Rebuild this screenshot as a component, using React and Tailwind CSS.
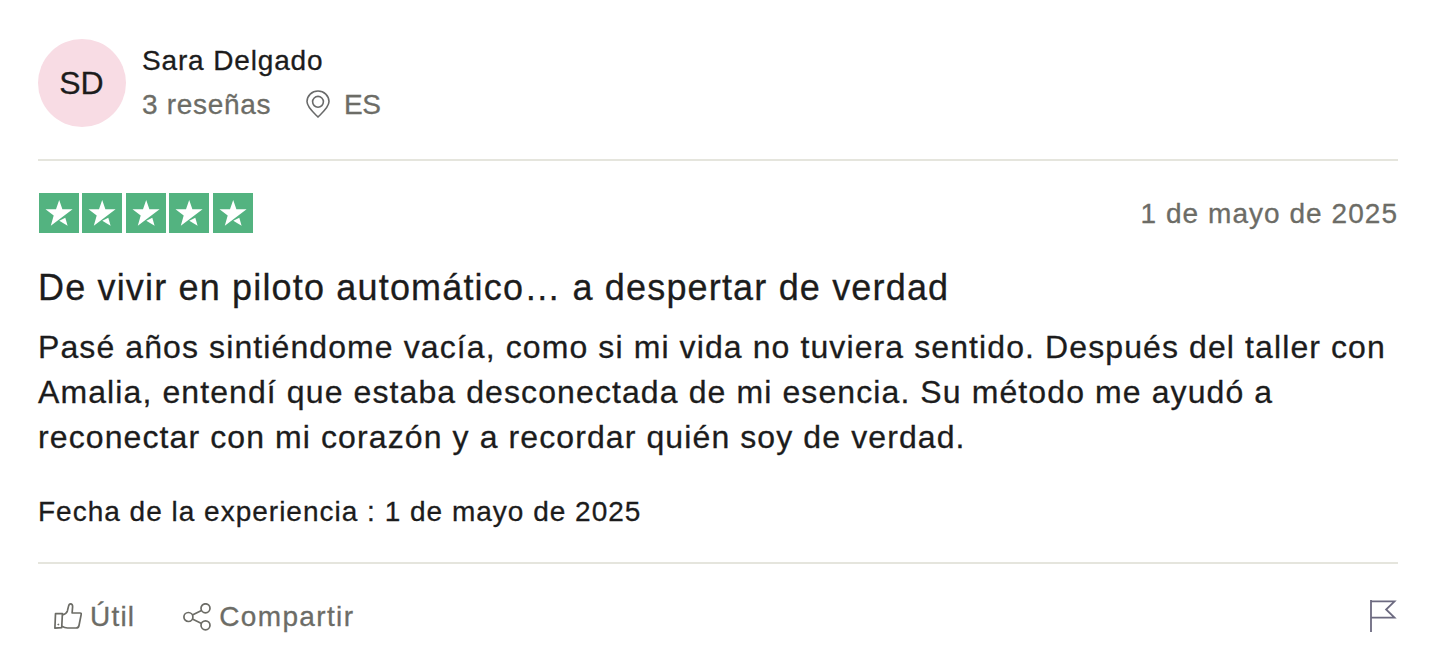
function StarTile() {
  return (
    <svg className="h-10 w-10" viewBox="0 0 40 40">
      <rect width="40" height="40" fill="#53b380" />
      <path d="M20.2 7l3.200 9.200h10.200L11.800 32.800l2.900-10.300L6.500 16.200h10.500z" fill="#fff" />
      <path d="M20.300 27.700l6-2.900 2.300 8z" fill="#fff" />
    </svg>
  );
}

function PinIcon() {
  return (
    <svg className="relative -top-px h-7 w-6" viewBox="0 0 24 28" fill="none" stroke="#696a6a" strokeWidth="1.6">
      <path d="M12 27C8.500 23.500 1 17.500 1 11.600a11 10.600 0 0 1 22 0C23 17.500 15.500 23.500 12 27z" />
      <circle cx="12" cy="11.800" r="5.400" />
    </svg>
  );
}

function ThumbIcon() {
  return (
    <svg className="h-7 w-7" viewBox="0 0 28 28" fill="none" stroke="#6c6c66" strokeWidth="1.7" strokeLinejoin="round">
      <path d="M1.500 10.700h6.900L7.700 24.600l-6.800.5z" />
      <path d="M8.400 11.800c2.600-.6 4.300-1.500 5-3.900l1.100-4.500c.4-1.700 1-2.500 2-2.500 1.600 0 2.200 1.200 2.100 3l-.5 6.100h8c.9 0 1.300.5 1.100 1.400L25 22.500c-.3 1.500-1.300 2.500-2.900 2.500h-8.600c-2.200 0-3.800-.6-5.700-1.700" />
      <circle cx="4.300" cy="21.500" r=".5" fill="#6c6c66" strokeWidth="1" />
    </svg>
  );
}

function ShareIcon() {
  return (
    <svg className="h-7 w-7" viewBox="0 0 28 28" fill="none" stroke="#6c6c66" strokeWidth="1.7">
      <circle cx="5.400" cy="14" r="4.500" />
      <circle cx="22.500" cy="5.300" r="4.500" />
      <circle cx="22.500" cy="22.300" r="4.500" />
      <path d="M9.400 12l9.100-4.600M9.400 16l9.100 4.400" />
    </svg>
  );
}

function FlagIcon() {
  return (
    <svg className="h-8 w-7" viewBox="0 0 28 32" fill="none" stroke="#6c6a80" strokeWidth="1.800">
      <path d="M1 0v32" />
      <path d="M1 1.300h23.500l-8.400 8.200 8.400 8.200H1" />
    </svg>
  );
}

function App() {
  return (
    <article className="min-h-[666px] bg-white pl-[38px] pr-[34px] pt-[39px] font-['Liberation_Sans',Arial,sans-serif] text-[28px] tracking-[0.85px] text-[#1c1c1c] [-webkit-text-stroke:0.3px]">
      <header className="flex h-[122px] items-start gap-4 border-b-2 border-[#e5e5dd]">
        <div className="flex h-[88px] w-[88px] items-center justify-center rounded-full bg-[#f8dce4] pr-px text-[32px] tracking-normal">
          SD
        </div>
        <div className="leading-[44px]">
          <div>Sara Delgado</div>
          <div className="flex items-center tracking-[0.7px] text-[#6c6c66]">
            <span className="w-[164px]">3 reseñas</span>
            <PinIcon />
            <span className="ml-[14px] tracking-[-0.5px]">ES</span>
          </div>
        </div>
      </header>

      <section className="h-[403px] border-b-2 border-[#e5e5dd] pt-8">
        <div className="flex h-10 items-center justify-between">
          <div className="ml-px flex gap-[3.4px]">
            {[1, 2, 3, 4, 5].map((star) => (
              <StarTile key={star} />
            ))}
          </div>
          <time className="pt-px tracking-[1.04px] text-[#6c6c66]">1 de mayo de 2025</time>
        </div>
        <h2 className="mt-8 text-[36px] leading-[45px] tracking-[1.17px]">
          De vivir en piloto automático… a despertar de verdad
        </h2>
        <p className="mt-[15px] text-[32px] leading-[45px] tracking-[1.1px]">
          Pasé años sintiéndome vacía, como si mi vida no tuviera sentido. Después del taller con
          <br />
          Amalia, entendí que estaba desconectada de mi esencia. Su método me ayudó a
          <br />
          reconectar con mi corazón y a recordar quién soy de verdad.
        </p>
        <p className="mt-[31px] leading-[42px] tracking-[1px]">
          Fecha de la experiencia : 1 de mayo de 2025
        </p>
      </section>

      <footer className="flex items-center pt-8 text-[#6c6c66]">
        <button className="ml-4 flex items-center gap-2 tracking-[1.2px] [-webkit-text-stroke:0.3px]">
          <ThumbIcon />
          Útil
        </button>
        <button className="ml-12 flex items-center gap-2 tracking-[1.35px] [-webkit-text-stroke:0.3px]">
          <ShareIcon />
          Compartir
        </button>
        <button className="relative -top-px ml-auto">
          <FlagIcon />
        </button>
      </footer>
    </article>
  );
}

export default App;
